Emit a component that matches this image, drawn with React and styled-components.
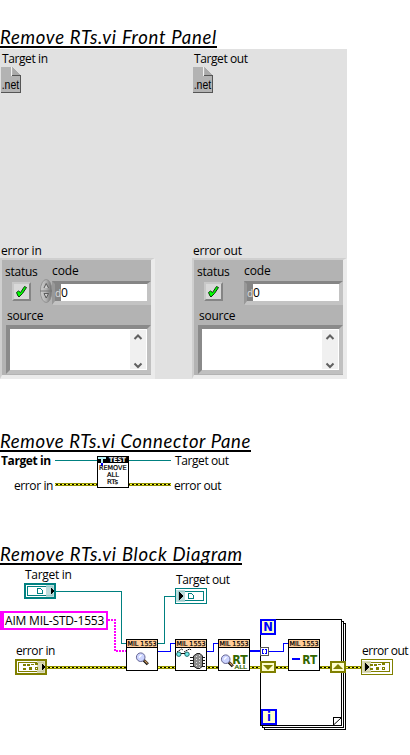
import React from "react";
import styled, { createGlobalStyle, css } from "styled-components";

const GlobalStyle = createGlobalStyle`
  body { margin: 0; background: #fff; color: #000; }
  #root { overflow: hidden; }
`;

const uiFont = css`
  font-family: "Open Sans", "Noto Sans", sans-serif;
  font-size: 12px;
  line-height: 16px;
  white-space: nowrap;
`;

const Page = styled.main`
  width: 410px;
  height: 755px;
  overflow: hidden;
  display: flex;
  flex-direction: column;
  background: #fff;
`;

const Section = styled.section`
  flex: none;
  padding-top: ${(p) => p.$top}px;
  height: ${(p) => p.$height}px;
  box-sizing: border-box;
`;

const Heading = styled.h2`
  margin: 0;
  width: ${(p) => p.$width}px;
  height: 20px;
  border-bottom: 2px solid #000;
  font: italic 400 18.5px/22px Lato, sans-serif;
  letter-spacing: ${(p) => p.$spacing}px;
  white-space: nowrap;
`;

const Label = styled.span`
  ${uiFont}
  display: block;
  box-sizing: border-box;
  height: 16px;
  padding-top: ${(p) => p.$drop ?? 0}px;
  padding-left: ${(p) => p.$pad ?? 0}px;
  font-weight: ${(p) => (p.$bold ? 700 : 400)};
  letter-spacing: ${(p) => p.$spacing ?? -0.4}px;
`;

const FrontPanel = styled.div`
  width: 347px;
  height: 330px;
  margin-top: 1px;
  background: #e1e1e1;
  display: grid;
  grid-template-columns: 192px 155px;
  grid-template-rows: 193px 137px;
`;

const RefCell = styled.div`
  padding: 2px 0 0 1px;
  & > svg { display: block; }
`;

const Cluster = styled.div`
  box-sizing: border-box;
  width: 155px;
  height: 121px;
  border-style: solid;
  border-width: 2px 4px 4px 2px;
  border-color: #cfcfcf #ebebeb #ebebeb #cfcfcf;
  background: #b3b3b3;
  padding: 3px 0 0 3px;
`;

const TopRow = styled.div`
  display: grid;
  grid-template-columns: 35px 12px 99px;
  grid-template-rows: 18px 25px;
`;

const SpinnerSlot = styled.div`
  margin-top: -2px;
  & > svg { display: block; }
`;

const StatusButton = styled.div`
  box-sizing: border-box;
  width: 19px;
  height: 19px;
  margin: 1px 0 0 7px;
  border: 2px solid;
  border-color: #c8c8c8 #858585 #858585 #c8c8c8;
  background: #d9d9d9;
  & > svg { display: block; }
`;

const CodeField = styled.div`
  ${uiFont}
  box-sizing: border-box;
  width: 99px;
  height: 24px;
  border-style: solid;
  border-width: 3px 4px 4px 3px;
  border-color: #858585 #c3c3c3 #c3c3c3 #989898;
  display: flex;
  background: #fff;
  line-height: 18px;
`;

const Radix = styled.span`
  width: 6px;
  background: #858585;
  color: #ddd;
  font-size: 10px;
`;

const SourceBox = styled.div`
  box-sizing: border-box;
  width: 145px;
  height: 49px;
  margin: 1px 0 0 1px;
  border: 4px solid;
  border-color: #8a8a8a #c0c0c0 #c0c0c0 #8a8a8a;
  background: #fff;
  display: flex;
  justify-content: flex-end;
`;

const SourceLabel = styled(Label)`
  margin-top: 2px;
`;

const ScrollBar = styled.div`
  width: 16px;
  margin: 1px 1px 1px 0;
  background: #f0f0f0;
  display: flex;
  flex-direction: column;
  justify-content: space-between;
  & > svg { display: block; }
`;

const Connector = styled.div`
  display: grid;
  width: 260px;
  grid-template-columns: 55px 116px 1fr;
  grid-template-rows: 24px 24px;
  & > svg { grid-column: 2; grid-row: 1 / 3; display: block; }
`;

const ConnectorLabel = styled(Label)`
  grid-column: ${(p) => p.$col};
`;

const Diagram = styled.div`
  position: relative;
  width: 410px;
  height: 189px;
  margin-top: 1px;
  & > svg { display: block; }
`;

/* Nodes sit freely on the diagram canvas. */
const Node = styled.div`
  position: absolute;
  left: ${(p) => p.$x}px;
  top: ${(p) => p.$y}px;
  & > svg { display: block; }
`;

const StringConstant = styled.div`
  ${uiFont}
  box-sizing: border-box;
  width: 108px;
  height: 19px;
  border: 2px solid #f0f;
  border-left-width: 4px;
  padding-left: 1px;
  line-height: 16px;
  letter-spacing: -0.2px;
`;

const NetRef = () => (
  <svg width="20" height="26" shapeRendering="crispEdges">
    <path d="M0 0H11L20 9V26H0Z" fill="#b3b3b3" />
    <path d="M12 1L19 8H12Z" fill="#a9a9a9" />
    <path d="M10.5 0V9" stroke="#f0f0f0" />
    <path d="M11 8.5H20M19.5 9V26M0 25.5H20" stroke="#555" />
    <text x=".7" y="22" fontFamily="Liberation Sans" fontSize="12" textLength="17.5" lengthAdjust="spacingAndGlyphs">.net</text>
  </svg>
);

const Check = () => (
  <svg width="15" height="15">
    <path d="M2.5 8.5L4.5 7L6.5 8.5L10.5 2.5L12.5 3.5L8.5 9.5L5 13L4 12Z" fill="#00ff00" stroke="#0b3d0b" />
  </svg>
);

const Spinner = () => (
  <svg width="13" height="24">
    <defs>
      <linearGradient id="knob">
        <stop offset="0" stopColor="#cfcfcf" />
        <stop offset=".5" stopColor="#b0b0b0" />
        <stop offset="1" stopColor="#6d6d6d" />
      </linearGradient>
    </defs>
    <ellipse cx="6.2" cy="12" rx="5.8" ry="11.5" fill="url(#knob)" stroke="#8a8a8a" strokeWidth=".8" />
    <path d="M0 12H12" stroke="#777" />
    <path d="M4 9L6.2 4.5L8.5 9M4 14.5H8.5L6.2 19Z" fill="#d0d0d0" stroke="#505050" strokeWidth=".9" />
  </svg>
);

const Chevron = ({ down }) => (
  <svg width="16" height="14">
    <path d={down ? "M4.5 8.5L8 12L11.5 8.5" : "M4.5 9L8 5.5L11.5 9"} fill="none" stroke="#606060" strokeWidth="2" />
  </svg>
);

const ErrorCluster = ({ title, editable }) => (
  <div>
    <Label $pad={1} $drop={1} $spacing={-0.2}>{title}</Label>
    <Cluster>
      <TopRow>
        <Label $drop={1} $spacing={-0.25}>status</Label>
        <span />
        <Label $spacing={-0.1}>code</Label>
        <StatusButton><Check /></StatusButton>
        <SpinnerSlot>{editable && <Spinner />}</SpinnerSlot>
        <CodeField><Radix>d</Radix><span>0</span></CodeField>
      </TopRow>
      <SourceLabel $pad={2} $spacing={-0.25}>source</SourceLabel>
      <SourceBox>
        <ScrollBar><Chevron /><Chevron down /></ScrollBar>
      </SourceBox>
    </Cluster>
  </div>
);

const ErrorWire = ({ x1, x2, y }) => (
  <g shapeRendering="crispEdges">
    <rect x={x1} y={y - 1} width={x2 - x1} height="3" fill="#8c8c00" />
    <rect x={x1} y={y} width={x2 - x1} height="1" fill="#ffff33" />
    <path d={`M${x1 + 1} ${y + 0.5}H${x2}`} stroke="#000" strokeDasharray="2 2" />
  </g>
);

const ConnectorDrawing = () => (
  <svg width="116" height="37">
    <path d="M0 8.5H116" stroke="#008080" shapeRendering="crispEdges" />
    <ErrorWire x1={0} x2={116} y={32} />
    <rect x="42.5" y="4.5" width="31" height="31" fill="#fff" stroke="#000" shapeRendering="crispEdges" />
    <rect x="42" y="4" width="32" height="7" />
    <path d="M43 5H51V7H48V11H46V7H43Z" fill="#b9f2f7" />
    <path d="M46 11H48V14H46Z" fill="#00f" />
    <g fontFamily="DejaVu Sans">
      <text x="54" y="10" fontSize="6.5" fontWeight="700" fill="#fff" textLength="17" lengthAdjust="spacingAndGlyphs">TEST</text>
      <g fontSize="6.6" stroke="#000" strokeWidth=".2">
        <text x="44" y="17.5" textLength="27.5" lengthAdjust="spacingAndGlyphs">REMOVE</text>
        <text x="52" y="24.7" textLength="12" lengthAdjust="spacingAndGlyphs">ALL</text>
        <text x="52" y="31.7" textLength="11" lengthAdjust="spacingAndGlyphs">RTs</text>
      </g>
    </g>
  </svg>
);

const Terminal = ({ kind, control }) => {
  const color = kind === "ref" ? "#008080" : "#808000";
  const shade = kind === "ref" ? "#b3d6d6" : "#d6d6b3";
  return (
    <svg width="32" height="16" shapeRendering="crispEdges">
      <rect x={control ? 1 : 0.5} y={control ? 1 : 0.5} width={control ? 30 : 31} height={control ? 14 : 15} fill="#fff" stroke={color} strokeWidth={control ? 2 : 1} />
      <rect x="3.5" y="3.5" width="25" height="9" fill="none" stroke={color} />
      <rect x={control ? 22 : 1} y="2" width={control ? 8 : 9} height="12" fill={shade} opacity=".85" />
      <path d={control ? "M27 5V11L30 8Z" : "M4 4V12L8 8Z"} />
      {kind === "ref" ? (
        <path d="M13.5 5.5H16.5L18.5 7.5V10.5H13.5Z" fill="#fff" stroke={color} />
      ) : (
        <g transform={control ? undefined : "translate(1 0)"} fill={color}>
          <path d="M8 5H11V7H8ZM12 5H15V7H12ZM16 5H19V6H16ZM20 4H23V6H20Z" />
          <path d="M8 9H11V11H8ZM14 8H17V11H14ZM20 8H23V11H20Z" />
          <path d="M21 9H22V10H21Z" fill="#fff" />
        </g>
      )}
    </svg>
  );
};

const Magnifier = ({ x, y }) => (
  <g transform={`translate(${x} ${y})`}>
    <path d="M7.8 7.8L12.3 12.3" stroke="#111" strokeWidth="3" />
    <path d="M9 8.5L12 11.5" stroke="#d09a60" strokeWidth="1.1" />
    <circle cx="5.2" cy="5.2" r="4.3" fill="#ccd4ff" stroke="#666694" />
    <path d="M3.5 5.5L6 3" stroke="#fff" strokeWidth="1.3" />
  </g>
);

const Glasses = () => (
  <g fill="none" stroke="#111">
    <path d="M2 13L6.5 10L8 11M9 13L14.5 10L16.5 11" strokeDasharray="1.6 .5" />
    <circle cx="3.8" cy="15.2" r="2.2" fill="#70e8e8" stroke="#1e6c6c" />
    <circle cx="12" cy="15.2" r="2.2" fill="#70e8e8" stroke="#1e6c6c" />
    <path d="M6 14.5H10" />
  </g>
);

const Connector1553 = () => (
  <g>
    <path d="M15 18.5H30M15 21.5H30M15 24.5H30M15 27.5H30" stroke="#111" shapeRendering="crispEdges" />
    <path d="M18.5 17L22 14.5H25L27.5 17V27L25 29.5H22L18.5 27Z" fill="#8c8c8c" stroke="#222" />
    <path d="M21.5 17V28M24.5 16V29" stroke="#ddd" strokeDasharray="1 2" />
  </g>
);

const MilVi = ({ kind }) => (
  <svg width="32" height="32">
    <rect x=".5" y=".5" width="31" height="31" fill="#fff" stroke="#000" shapeRendering="crispEdges" />
    <path d="M1 1H31V8H1Z" fill="#ffcc99" shapeRendering="crispEdges" />
    <path d="M0 8.5H32" stroke="#000" shapeRendering="crispEdges" />
    <text x="1.5" y="7" fontFamily="DejaVu Sans" fontSize="6.8" stroke="#000" strokeWidth=".2" textLength="29" lengthAdjust="spacingAndGlyphs">MIL 1553</text>
    {kind === "find" && <Magnifier x={9.5} y={13} />}
    {kind === "open" && <><Glasses /><Connector1553 /></>}
    {kind === "all" && (
      <>
        <Magnifier x={2.5} y={15} />
        <g fontFamily="DejaVu Sans" fill="#336600">
          <text x="14.2" y="25" fontSize="12" fontWeight="700" textLength="15.5" lengthAdjust="spacingAndGlyphs">RT</text>
          <text x="16.5" y="30.4" fontSize="5.4" stroke="#336600" strokeWidth=".2" textLength="12.5" lengthAdjust="spacingAndGlyphs">ALL</text>
        </g>
      </>
    )}
    {kind === "remove" && (
      <>
        <path d="M4 19H12V21H4Z" fill="#00f" />
        <text x="14.2" y="25" fontFamily="DejaVu Sans" fontSize="12" fontWeight="700" fill="#336600" textLength="15" lengthAdjust="spacingAndGlyphs">RT</text>
      </>
    )}
  </svg>
);

const Wires = () => (
  <svg width="410" height="189" viewBox="0 566 410 189">
    <g fill="#fff" stroke="#000" shapeRendering="crispEdges">
      <rect x="264.5" y="623.5" width="81" height="106" />
      <rect x="262.5" y="621.5" width="81" height="106" />
      <rect x="260.5" y="619.5" width="81" height="106" />
      <path d="M333.5 725V717.5H342" fill="none" />
    </g>
    <path d="M333.5 725L341.5 717.5" stroke="#000" />
    <g fill="none" shapeRendering="crispEdges">
      <path d="M56 591.5H121.5V643.5H126M158 643.5H164.5V596.5H175" stroke="#008080" />
      <path d="M108 620H115V651H126" stroke="#f0f" strokeWidth="2" strokeDasharray="2 1" />
      <path d="M158 651.5H170.5V643.5H175M207 651.5H213.5V643.5H218M269 651.5H283.5V643.5H288" stroke="#00f" />
      <path d="M250 651H260" stroke="#00f" strokeWidth="2" />
    </g>
    <ErrorWire x1={47} x2={362} y={667} />
  </svg>
);

const LoopGlyph = ({ letter }) => (
  <svg width="16" height="16">
    <rect x="1" y="1" width="14" height="14" fill="#ffffcc" stroke="#00f" strokeWidth="2" />
    <text x="8" y="12.3" textAnchor="middle" fontFamily="DejaVu Sans" fontWeight="700" fontSize="11.5" fill="#00f">{letter}</text>
  </svg>
);

const ShiftRegister = ({ up }) => (
  <svg width="16" height="12">
    <rect x="1" y="1" width="14" height="10" fill="#ffffcc" stroke="#808000" strokeWidth="2" />
    <path d={up ? "M3 8L8 3L13 8Z" : "M3 4H13L8 9Z"} fill="#808000" />
  </svg>
);

const Tunnel = () => (
  <svg width="9" height="9" shapeRendering="crispEdges">
    <rect x=".5" y=".5" width="8" height="8" fill="#fff" stroke="#555" />
    <path d="M4 2.5H2.5V6.5H4M5 2.5H6.5V6.5H5" fill="none" stroke="#00f" />
  </svg>
);

export default function App() {
  return (
    <Page>
      <GlobalStyle />
      <Section $top={26} $height={407}>
        <Heading $width={217} $spacing={0.72}>Remove RTs.vi Front Panel</Heading>
        <FrontPanel>
          <RefCell><Label $pad={1}>Target in</Label><NetRef /></RefCell>
          <RefCell><Label $pad={1}>Target out</Label><NetRef /></RefCell>
          <ErrorCluster title="error in" editable />
          <ErrorCluster title="error out" />
        </FrontPanel>
      </Section>
      <Section $top={23} $height={110}>
        <Heading $width={251} $spacing={0.62}>Remove RTs.vi Connector Pane</Heading>
        <Connector>
          <ConnectorLabel $col={1} $pad={1} $drop={1} $bold>Target in</ConnectorLabel>
          <ConnectorDrawing />
          <ConnectorLabel $col={3} $pad={4} $drop={1}>Target out</ConnectorLabel>
          <ConnectorLabel $col={1} $pad={14} $drop={2}>error in</ConnectorLabel>
          <ConnectorLabel $col={3} $pad={3} $drop={2}>error out</ConnectorLabel>
        </Connector>
      </Section>
      <Section $top={26} $height={238}>
        <Heading $width={242} $spacing={0.72}>Remove RTs.vi Block Diagram</Heading>
        <Diagram>
          <Wires />
          <Node $x={25} $y={1}><Label $spacing={-0.3}>Target in</Label></Node>
          <Node $x={24} $y={17}><Terminal kind="ref" control /></Node>
          <Node $x={176} $y={6}><Label>Target out</Label></Node>
          <Node $x={175} $y={22}><Terminal kind="ref" /></Node>
          <Node $x={0} $y={45}><StringConstant>AIM MIL-STD-1553</StringConstant></Node>
          <Node $x={16} $y={77}><Label>error in</Label></Node>
          <Node $x={15} $y={93}><Terminal kind="error" control /></Node>
          <Node $x={126} $y={73}><MilVi kind="find" /></Node>
          <Node $x={175} $y={73}><MilVi kind="open" /></Node>
          <Node $x={218} $y={73}><MilVi kind="all" /></Node>
          <Node $x={288} $y={73}><MilVi kind="remove" /></Node>
          <Node $x={260} $y={53}><LoopGlyph letter="N" /></Node>
          <Node $x={261} $y={143}><LoopGlyph letter="i" /></Node>
          <Node $x={260} $y={81}><Tunnel /></Node>
          <Node $x={260} $y={95}><ShiftRegister /></Node>
          <Node $x={330} $y={95}><ShiftRegister up /></Node>
          <Node $x={361} $y={93}><Terminal kind="error" /></Node>
          <Node $x={362} $y={77}><Label $spacing={-0.5}>error out</Label></Node>
        </Diagram>
      </Section>
    </Page>
  );
}
